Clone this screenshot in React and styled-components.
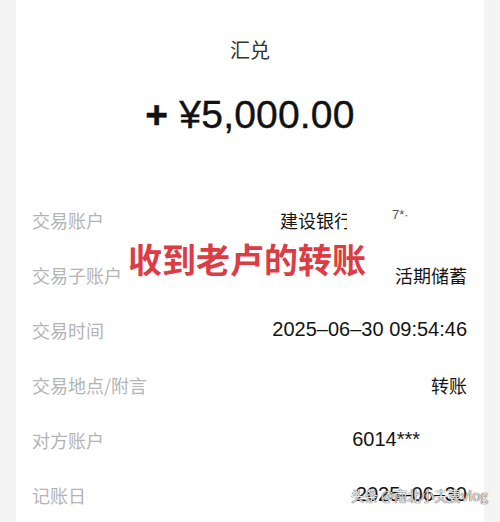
import React from 'react';
import styled, { createGlobalStyle } from 'styled-components';

const GlobalStyle = createGlobalStyle`
	body {
		margin: 0;
		background: #f4f4f4;
		font-family: "Liberation Sans", "Noto Sans CJK SC", sans-serif;
	}
`;

const rows = [
	{ label: '交易账户', kind: 'bank' },
	{ label: '交易子账户', value: '活期储蓄' },
	{ label: '交易时间', value: '2025–06–30 09:54:46', numeric: true },
	{ label: '交易地点/附言', value: '转账' },
	{ label: '对方账户', kind: 'account' },
	{ label: '记账日', value: '2025–06–30', numeric: true },
];

const App = () => {
	return (
		<Page>
			<GlobalStyle />
			<Card>
				<Title>汇兑</Title>
				<Amount><Plus>+</Plus> ¥5,000.00</Amount>
				<List>
					{rows.map(row => (
						<Row key={row.label}>
							<Label>{row.label}</Label>
							{row.kind === 'bank' && (
								<Value>
									<Clipped>建设银行</Clipped>
									<Stars>7*·</Stars>
								</Value>
							)}
							{row.kind === 'account' && (
								<Value numeric $pad={47}>6014***</Value>
							)}
							{!row.kind && <Value numeric={row.numeric}>{row.value}</Value>}
						</Row>
					))}
				</List>
				<Stamp>收到老卢的转账</Stamp>
				<Watermark>头条 @南北小夫妻vlog</Watermark>
			</Card>
		</Page>
	);
};

const Page = styled.div`
	width: 500px;
	height: 522px;
	overflow: hidden;
	padding: 0 16px;
	box-sizing: border-box;
`;

const Card = styled.div`
	position: relative;
	background: #fff;
	height: 522px;
	padding-top: 35px;
	box-sizing: border-box;
	display: flex;
	flex-direction: column;
	align-items: center;
`;

const Title = styled.div`
	font-size: 20px;
	line-height: 30px;
	color: #333;
	font-family: "Noto Sans CJK SC", sans-serif;
`;

const Amount = styled.div`
	margin-top: 25px;
	font-size: 39px;
	line-height: 50px;
	color: #111;
	letter-spacing: 0.2px;
	-webkit-text-stroke: 0.4px #111;
`;

const Plus = styled.span`
	font-weight: 700;
`;

const List = styled.div`
	margin-top: 52px;
	align-self: stretch;
	padding: 0 17px 0 16px;
	display: flex;
	flex-direction: column;
`;

const Row = styled.div`
	height: 55px;
	display: flex;
	align-items: center;
	justify-content: space-between;
`;

const Label = styled.span`
	font-family: "Noto Sans CJK SC", sans-serif;
	font-size: 18px;
	color: #b4b4b4;
`;

const Value = styled.span`
	display: flex;
	align-items: center;
	font-family: ${p => (p.numeric ? '"Liberation Sans", sans-serif' : '"Noto Sans CJK SC", sans-serif')};
	font-size: ${p => (p.numeric ? '20px' : '18px')};
	color: #141414;
	margin-right: ${p => p.$pad || 0}px;
`;

const Clipped = styled.span`
	display: inline-block;
	width: 67px;
	overflow: hidden;
	white-space: nowrap;
	margin-right: 45px;
`;

const Stars = styled.span`
	font-family: "Liberation Sans", sans-serif;
	font-size: 13px;
	color: #555;
	width: 75px;
	margin-top: -10px;
`;

const Stamp = styled.div`
	position: absolute;
	left: 108px;
	top: 237px;
	font-family: "Noto Sans CJK SC", sans-serif;
	font-weight: 700;
	font-size: 34px;
	line-height: 44px;
	color: #dc3c44;
	background: #fff;
	padding: 0 4px;
`;

const Watermark = styled.div`
	position: absolute;
	right: -4px;
	bottom: 17px;
	font-family: "Noto Sans CJK SC", "Liberation Sans", sans-serif;
	font-size: 13.5px;
	color: #e6e6e6;
	text-shadow: 0 0 1px #444, 0 0 1px #444;
`;

export default App;
